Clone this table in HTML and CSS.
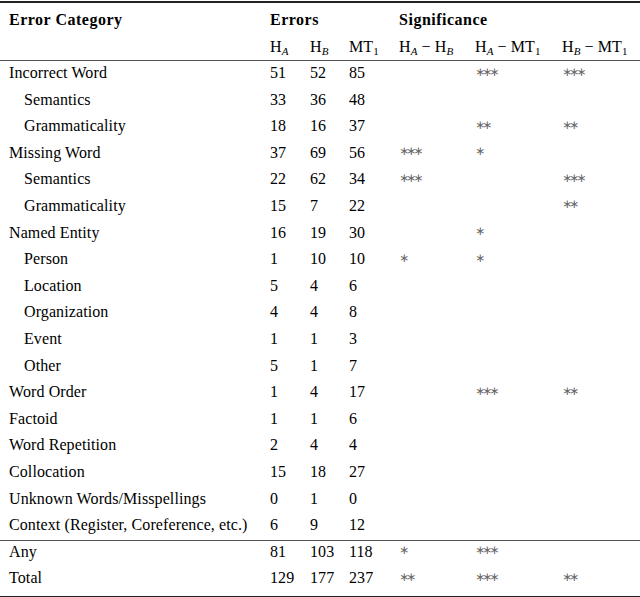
FILE: index.html
```html
<!DOCTYPE html>
<html>
<head>
<meta charset="utf-8">
<link rel="stylesheet" href="styles.css">
</head>
<body>
<table class="tbl">
  <colgroup>
    <col class="c-cat"><col class="c-ha"><col class="c-hb"><col class="c-mt">
    <col class="c-s1"><col class="c-s2"><col class="c-s3">
  </colgroup>
  <thead>
    <tr class="h1">
      <th class="cat">Error Category</th>
      <th colspan="3">Errors</th>
      <th colspan="3">Significance</th>
    </tr>
    <tr class="h2">
      <td></td>
      <td>H<sub class="it">A</sub></td>
      <td>H<sub class="it">B</sub></td>
      <td>MT<sub>1</sub></td>
      <td>H<sub class="it">A</sub> − H<sub class="it">B</sub></td>
      <td>H<sub class="it">A</sub> − MT<sub>1</sub></td>
      <td>H<sub class="it">B</sub> − MT<sub>1</sub></td>
    </tr>
  </thead>
  <tbody class="main">
    <tr><td class="cat">Incorrect Word</td><td>51</td><td>52</td><td>85</td><td></td><td><span class="st">∗∗∗</span></td><td><span class="st">∗∗∗</span></td></tr>
    <tr><td class="cat sub-cat">Semantics</td><td>33</td><td>36</td><td>48</td><td></td><td></td><td></td></tr>
    <tr><td class="cat sub-cat">Grammaticality</td><td>18</td><td>16</td><td>37</td><td></td><td><span class="st">∗∗</span></td><td><span class="st">∗∗</span></td></tr>
    <tr><td class="cat">Missing Word</td><td>37</td><td>69</td><td>56</td><td><span class="st">∗∗∗</span></td><td><span class="st">∗</span></td><td></td></tr>
    <tr><td class="cat sub-cat">Semantics</td><td>22</td><td>62</td><td>34</td><td><span class="st">∗∗∗</span></td><td></td><td><span class="st">∗∗∗</span></td></tr>
    <tr><td class="cat sub-cat">Grammaticality</td><td>15</td><td>7</td><td>22</td><td></td><td></td><td><span class="st">∗∗</span></td></tr>
    <tr><td class="cat">Named Entity</td><td>16</td><td>19</td><td>30</td><td></td><td><span class="st">∗</span></td><td></td></tr>
    <tr><td class="cat sub-cat">Person</td><td>1</td><td>10</td><td>10</td><td><span class="st">∗</span></td><td><span class="st">∗</span></td><td></td></tr>
    <tr><td class="cat sub-cat">Location</td><td>5</td><td>4</td><td>6</td><td></td><td></td><td></td></tr>
    <tr><td class="cat sub-cat">Organization</td><td>4</td><td>4</td><td>8</td><td></td><td></td><td></td></tr>
    <tr><td class="cat sub-cat">Event</td><td>1</td><td>1</td><td>3</td><td></td><td></td><td></td></tr>
    <tr><td class="cat sub-cat">Other</td><td>5</td><td>1</td><td>7</td><td></td><td></td><td></td></tr>
    <tr><td class="cat">Word Order</td><td>1</td><td>4</td><td>17</td><td></td><td><span class="st">∗∗∗</span></td><td><span class="st">∗∗</span></td></tr>
    <tr><td class="cat">Factoid</td><td>1</td><td>1</td><td>6</td><td></td><td></td><td></td></tr>
    <tr><td class="cat">Word Repetition</td><td>2</td><td>4</td><td>4</td><td></td><td></td><td></td></tr>
    <tr><td class="cat">Collocation</td><td>15</td><td>18</td><td>27</td><td></td><td></td><td></td></tr>
    <tr><td class="cat">Unknown Words/Misspellings</td><td>0</td><td>1</td><td>0</td><td></td><td></td><td></td></tr>
    <tr><td class="cat">Context (Register, Coreference, etc.)</td><td>6</td><td>9</td><td>12</td><td></td><td></td><td></td></tr>
  </tbody>
  <tbody class="totals">
    <tr class="any"><td class="cat">Any</td><td>81</td><td>103</td><td>118</td><td><span class="st">∗</span></td><td><span class="st">∗∗∗</span></td><td></td></tr>
    <tr class="total"><td class="cat">Total</td><td>129</td><td>177</td><td>237</td><td><span class="st">∗∗</span></td><td><span class="st">∗∗∗</span></td><td><span class="st">∗∗</span></td></tr>
  </tbody>
</table>
</body>
</html>
```

FILE: styles.css
```css
html, body {
  margin: 0;
  padding: 0;
  background: #fff;
}

body {
  font-family: "Liberation Serif", "DejaVu Serif", "Times New Roman", serif;
  font-size: 16px;
  color: #000;
}

.tbl {
  width: 640px;
  margin-top: 1px;
  border-collapse: collapse;
  table-layout: fixed;
  border-top: 2px solid #222;
  border-bottom: 2px solid #222;
}

.c-cat { width: 270px; }
.c-ha { width: 40px; }
.c-hb { width: 39px; }
.c-mt { width: 50px; }
.c-s1 { width: 76px; }
.c-s2 { width: 87px; }
.c-s3 { width: 78px; }

.tbl th,
.tbl td {
  padding: 0;
  text-align: left;
  vertical-align: middle;
  white-space: nowrap;
  letter-spacing: 0.1px;
  line-height: 20px;
  font-family: "Liberation Serif", "DejaVu Serif", "Times New Roman", serif;
}

.tbl th {
  font-weight: bold;
  letter-spacing: 0.5px;
}

.tbl .cat {
  padding-left: 9px;
}

.tbl .sub-cat {
  padding-left: 24px;
}

.h1 th {
  height: 28px;
  padding-top: 3px;
}

.h2 td {
  height: 26px;
}

thead {
  border-bottom: 1px solid #555;
}

.main td {
  height: 24px;
  padding-bottom: 2.6px;
}

.main tr {
  height: 26.6px;
}

.totals {
  border-top: 1px solid #555;
}

.any td {
  height: 22px;
  padding-bottom: 4px;
}

.total td {
  height: 23px;
  padding-bottom: 6px;
}

sub {
  font-size: 11px;
  line-height: 0;
  vertical-align: -3px;
  letter-spacing: 0;
}

sub.it {
  font-style: italic;
}

.tbl .st {
  font-family: "DejaVu Sans", sans-serif;
  font-size: 12px;
  color: #666;
  letter-spacing: -3px;
  position: relative;
  top: -2px;
}
```
